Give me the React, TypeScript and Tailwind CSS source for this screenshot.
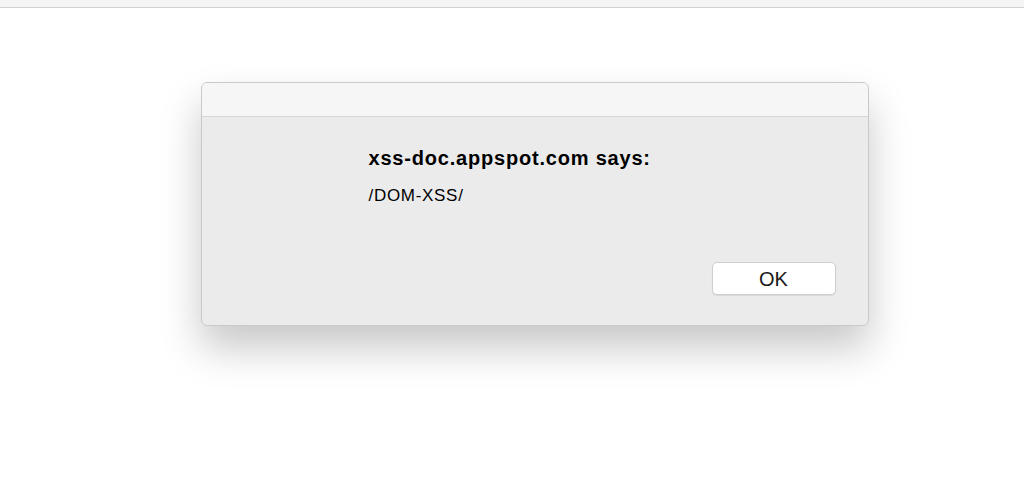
import React from 'react';

export default function App() {
  return (
    <div className="w-[1024px] h-[495px] bg-white flex flex-col overflow-hidden" style={{ fontFamily: '"Liberation Sans", Arial, sans-serif' }}>
      <div className="h-[8px] bg-[#f4f4f4] border-b border-[#d0d0d0] shrink-0" />
      <div className="flex justify-center pt-[74px] pl-[45px]">
        <div className="w-[668px] h-[244px] rounded-[6px] border border-[#c9c9c9] bg-[#ebebeb] flex flex-col overflow-hidden shadow-[0_22px_40px_rgba(0,0,0,0.22)]">
          <div className="h-[34px] bg-[#f6f6f6] border-b border-[#d6d6d6] shrink-0" />
          <div className="flex-1 flex flex-col pl-[167px] pr-[32px]">
            <div className="mt-[29px] text-[20px] font-bold text-black leading-[24px] tracking-[0.8px]">xss-doc.appspot.com says:</div>
            <div className="mt-[16px] text-[17px] text-black leading-[20px] tracking-[0.7px]">/DOM-XSS/</div>
            <div className="flex justify-end mt-[56px]">
              <button className="w-[124px] h-[33px] bg-white border border-[#cfcfcf] rounded-[5px] text-[20px] leading-[24px] text-[#1a1a1a] shadow-[0_1px_1px_rgba(0,0,0,0.08)]">
                OK
              </button>
            </div>
          </div>
        </div>
      </div>
    </div>
  );
}
